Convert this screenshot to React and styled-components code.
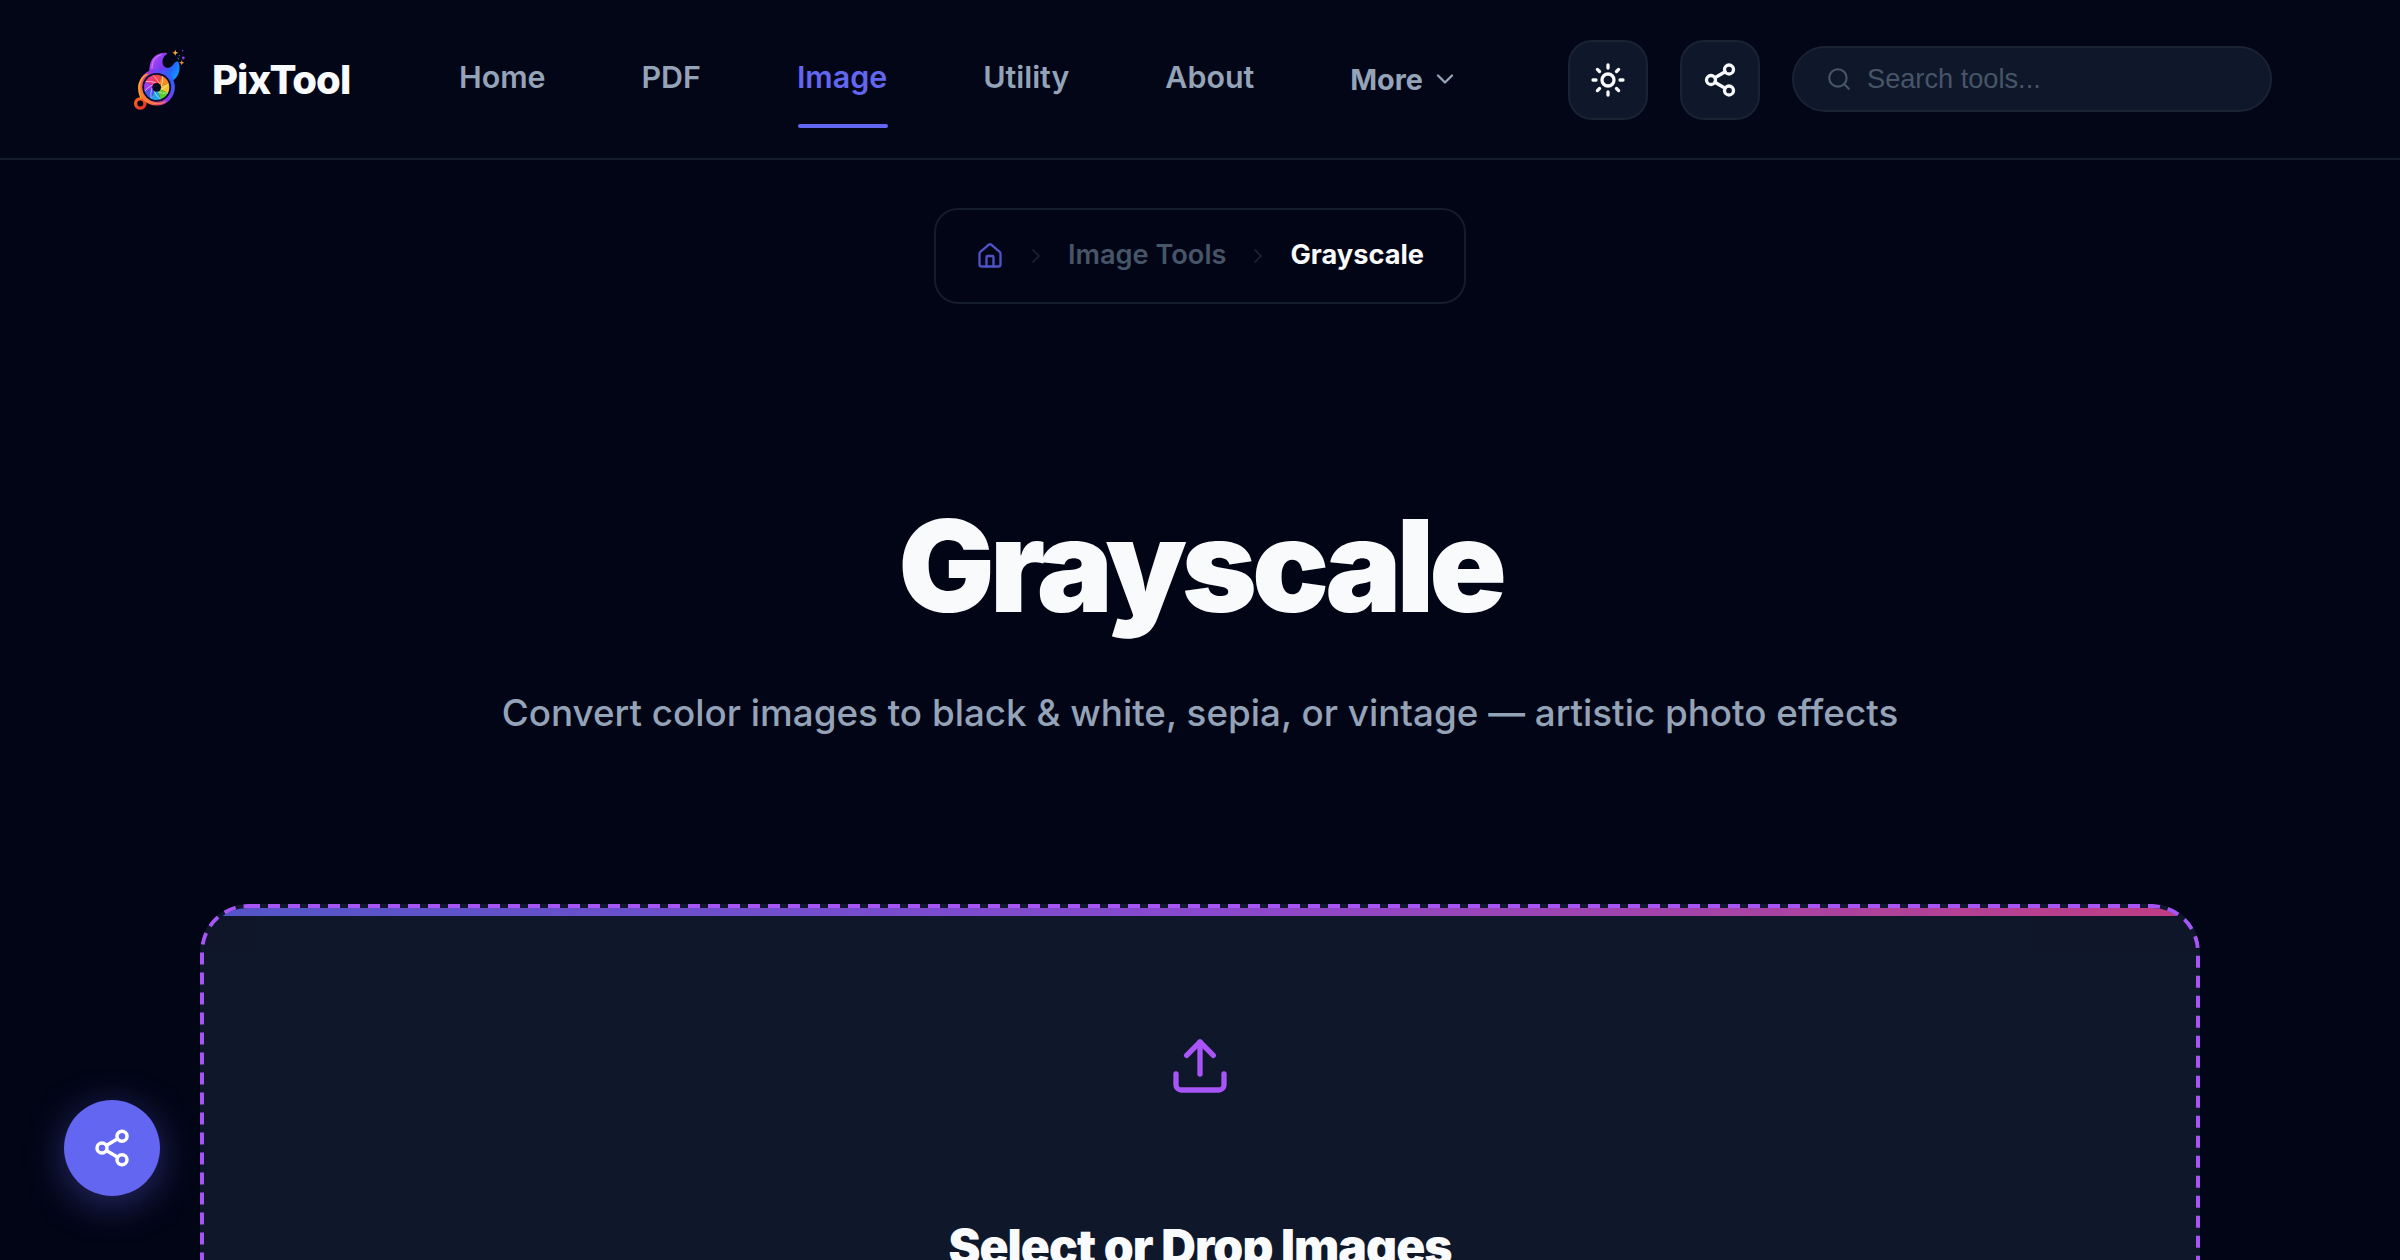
import styled, { createGlobalStyle } from "styled-components";
import { ChevronDown, ChevronRight, House, Search, Share2, Sun, Upload } from "lucide-react";

const links = ["Home", "PDF", "Image", "Utility", "About"];

// blade colours of the shutter, clockwise from the top
const blades = ["#f4444e", "#fb8a1e", "#f5c22d", "#5fc92a", "#22a7e8", "#4a55f0", "#a03df0", "#ee3a7c"];

function point(angle, radius) {
    const rad = ((angle - 90) * Math.PI) / 180;
    return `${(28.7 + radius * Math.cos(rad)).toFixed(2)} ${(39.3 + radius * Math.sin(rad)).toFixed(2)}`;
}

function Logo() {
    const step = 360 / blades.length;
    return (
        <svg width="64" height="64" viewBox="0 0 64 64" fill="none">
            <defs>
                <linearGradient id="wrench" x1="24" y1="8" x2="52" y2="24" gradientUnits="userSpaceOnUse">
                    <stop offset="0" stopColor="#b44df5" />
                    <stop offset="0.45" stopColor="#7a35ee" />
                    <stop offset="0.75" stopColor="#1f6bff" />
                    <stop offset="1" stopColor="#1597ff" />
                </linearGradient>
                <linearGradient id="ring" x1="12" y1="48" x2="44" y2="30" gradientUnits="userSpaceOnUse">
                    <stop offset="0" stopColor="#ff8a1c" />
                    <stop offset="0.3" stopColor="#f0476c" />
                    <stop offset="0.6" stopColor="#8a35f0" />
                    <stop offset="1" stopColor="#2b62ff" />
                </linearGradient>
                <linearGradient id="eye" x1="8" y1="50" x2="17" y2="62" gradientUnits="userSpaceOnUse">
                    <stop offset="0" stopColor="#ff6a1f" />
                    <stop offset="1" stopColor="#e3262b" />
                </linearGradient>
            </defs>
            <path d="M21.5 27C21 19 22 12.500 26.500 8.500C30 5.300 34.500 4.300 38.300 4.800C39.300 5 39.200 6 38.400 6.500C34.500 9 33.700 14 35.300 17.200C36.700 20.200 41 20.600 43.700 18.200C45.800 16.500 46 14.300 48.500 13.400C50 13 51 14.500 51.400 17C52.200 23 50 29 45.500 32Z" fill="url(#wrench)" />
            <path d="M24 20C24 13 27 8.500 33 6.800" stroke="#d486fb" strokeWidth="1" strokeLinecap="round" />
            <circle cx="12.300" cy="55.500" r="4.700" stroke="url(#eye)" strokeWidth="3.300" />
            <circle cx="28.700" cy="39.300" r="16" stroke="url(#ring)" strokeWidth="4.300" />
            <path d="M13 50C10 44 9.800 36 14 30.500C15.500 28.500 17.500 27 19 26.300" stroke="#ffae2b" strokeWidth="1.400" strokeLinecap="round" />
            <path d="M18 51.500C23 56 31 57 37 54" stroke="#ff8b52" strokeWidth="1" strokeLinecap="round" />
            <circle cx="28.700" cy="39.300" r="14.400" fill="#0a1230" />
            {blades.map((color, i) => (
                <path key={color} fill={color} d={`M${point(i * step - 18, 12.6)}A12.6 12.6 0 0 1 ${point((i + 1) * step - 17, 12.6)}L28.7 39.3Z`} />
            ))}
            {blades.map((color, i) => (
                <path key={color} stroke="#ffffff" strokeOpacity="0.85" strokeWidth="0.650" d={`M${point(i * step - 18, 12.4)}Q${point(i * step, 9.5)} ${point(i * step + 36, 4.6)}`} />
            ))}
            <circle cx="28.700" cy="39.300" r="4.400" fill="#060b1f" />
            <path d="M47.300 1.800L48.200 3.900L50.300 4.800L48.200 5.700L47.300 7.800L46.400 5.700L44.300 4.800L46.400 3.900Z" fill="#f9a62b" />
            <path d="M53.700 12L54.400 14.100L56.300 14.800L54.400 15.500L53.700 17.300L53 15.500L51.200 14.800L53 14.100Z" fill="#f9922b" />
            <circle cx="55.300" cy="10" r="1.400" fill="#8d39e0" />
            <circle cx="54.600" cy="2.700" r="0.900" fill="#6a30b8" />
            <circle cx="51.300" cy="7.700" r="0.800" fill="#2464d8" />
            <circle cx="50.300" cy="10.700" r="0.700" fill="#2183e0" />
        </svg>
    );
}

export default function App() {
    return (
        <Page>
            <GlobalStyle />
            <Header>
                <Brand>
                    <Logo />
                    <span>PixTool</span>
                </Brand>
                <Nav>
                    {links.map(link => (
                        <NavLink key={link} $active={link === "Image"}>{link}</NavLink>
                    ))}
                    <MoreButton>
                        More
                        <ChevronDown size={28} />
                    </MoreButton>
                </Nav>
                <Actions>
                    <IconButton aria-label="Theme"><Sun size={36} strokeWidth={2.2} /></IconButton>
                    <IconButton aria-label="Share"><Share2 size={36} strokeWidth={2.2} /></IconButton>
                    <SearchBox>
                        <Search size={26} />
                        <input type="text" placeholder="Search tools..." />
                    </SearchBox>
                </Actions>
            </Header>
            <Main>
                <Breadcrumb>
                    <House className="home" size={28} />
                    <ChevronRight className="separator" size={24} />
                    <span>Image Tools</span>
                    <ChevronRight className="separator" size={24} />
                    <strong>Grayscale</strong>
                </Breadcrumb>
                <Title>Grayscale</Title>
                <Subtitle>Convert color images to black &amp; white, sepia, or vintage — artistic photo effects</Subtitle>
                <DropZone>
                    <DashedBorder>
                        <rect x="2" y="2" width="1996" height="796" rx="46" />
                    </DashedBorder>
                    <Upload size={64} />
                    <h3>Select or Drop Images</h3>
                </DropZone>
            </Main>
            <FloatingShare aria-label="Share page"><Share2 size={40} strokeWidth={2.1} /></FloatingShare>
        </Page>
    );
}

const GlobalStyle = createGlobalStyle`
    * {
        box-sizing: border-box;
    }
    body {
        margin: 0;
        overflow: hidden;
        background-color: #020515;
        font-family: "Inter", sans-serif;
        color: #f8fafc;
    }
    h1, h3, p {
        margin: 0;
    }
    button {
        font-family: inherit;
        cursor: pointer;
    }
`

const Page = styled.div`
    height: 1260px;
    overflow: hidden;
`

const Header = styled.header`
    height: 160px;
    padding: 0 128px;
    display: flex;
    align-items: center;
    background-color: #020617;
    border-bottom: 2px solid #151c2c;
`

const Brand = styled.div`
    display: flex;
    align-items: center;
    gap: 20px;
    width: 331px;
    margin-top: 2px;
    span {
        padding-bottom: 2px;
        font-size: 40px;
        font-weight: 800;
        letter-spacing: -1px;
    }
`

const Nav = styled.nav`
    flex: 1;
    display: flex;
    align-items: center;
    gap: 96px;
`

const NavLink = styled.a`
    position: relative;
    padding: 16px 0;
    margin-top: -4px;
    font-size: 30.4px;
    line-height: 36px;
    font-weight: 600;
    color: ${({ $active }) => $active ? "#6366f1" : "#94a3b8"};
    &::after {
        content: "";
        display: ${({ $active }) => $active ? "block" : "none"};
        position: absolute;
        left: 1px;
        right: -1px;
        bottom: -17px;
        height: 4px;
        border-radius: 2px;
        background-color: #6366f1;
    }
`

const MoreButton = styled.button`
    display: flex;
    align-items: center;
    gap: 8px;
    padding: 0;
    border: none;
    background: none;
    font-size: 28.8px;
    font-weight: 700;
    color: #94a3b8;
`

const Actions = styled.div`
    display: flex;
    align-items: center;
    gap: 32px;
`

const IconButton = styled.button`
    width: 80px;
    height: 80px;
    margin-top: 2px;
    padding: 0;
    display: flex;
    align-items: center;
    justify-content: center;
    border: 2px solid #1a2332;
    border-radius: 24px;
    background-color: #0f172a;
    color: #f8fafc;
`

const SearchBox = styled.label`
    width: 480px;
    height: 66px;
    padding: 0 32px;
    display: flex;
    align-items: center;
    gap: 15px;
    border: 2px solid #1a2332;
    border-radius: 33px;
    background-color: #0f172a;
    color: #475569;
    input {
        flex: 1;
        min-width: 0;
        padding: 0;
        border: none;
        outline: none;
        background: none;
        font-family: "Liberation Sans", Arial, sans-serif;
        font-size: 27.2px;
        &::placeholder {
            color: #475569;
        }
    }
`

const Main = styled.main`
    padding: 48px 200px 0;
    display: flex;
    flex-direction: column;
    align-items: center;
`

const Breadcrumb = styled.div`
    height: 96px;
    padding: 0 40px;
    display: flex;
    align-items: center;
    gap: 20px;
    border: 2px solid #151c2c;
    border-radius: 24px;
    font-size: 27.2px;
    font-weight: 600;
    span {
        padding-bottom: 3px;
        color: #475569;
    }
    strong {
        padding-bottom: 3px;
        font-weight: 700;
    }
    .home {
        color: #5052c8;
    }
    .separator {
        color: #181f30;
    }
`

const Title = styled.h1`
    margin-top: 192px;
    font-size: 128px;
    line-height: 140px;
    font-weight: 900;
    letter-spacing: -5.12px;
`

const Subtitle = styled.p`
    margin-top: 48px;
    font-size: 36.8px;
    line-height: 58px;
    font-weight: 500;
    color: #94a3b8;
`

const DropZone = styled.section`
    position: relative;
    width: 2000px;
    height: 800px;
    margin-top: 162px;
    padding-top: 130px;
    display: flex;
    flex-direction: column;
    align-items: center;
    flex-shrink: 0;
    overflow: hidden;
    border-radius: 48px;
    background-color: #0f172a;
    color: #a855f7;
    &::before {
        content: "";
        position: absolute;
        top: 4px;
        left: 4px;
        right: 4px;
        height: 44px;
        border-radius: 44px 44px 0 0;
        background: linear-gradient(to right, #6366f1, #a855f7, #ec4899) top / 100% 8px no-repeat;
        opacity: 0.8;
    }
    h3 {
        margin-top: 120px;
        font-size: 48px;
        line-height: 58px;
        font-weight: 900;
        letter-spacing: -0.96px;
        color: #f8fafc;
    }
`

const DashedBorder = styled.svg`
    position: absolute;
    inset: 0;
    width: 100%;
    height: 100%;
    rect {
        fill: none;
        stroke: #a855f7;
        stroke-width: 4;
        stroke-dasharray: 12 8;
    }
`

const FloatingShare = styled.button`
    position: fixed;
    left: 64px;
    bottom: 64px;
    width: 96px;
    height: 96px;
    padding: 0;
    display: flex;
    align-items: center;
    justify-content: center;
    border: none;
    border-radius: 50%;
    background-color: #6366f1;
    color: #ffffff;
    box-shadow: 0 8px 40px rgba(99, 102, 241, 0.4);
`
